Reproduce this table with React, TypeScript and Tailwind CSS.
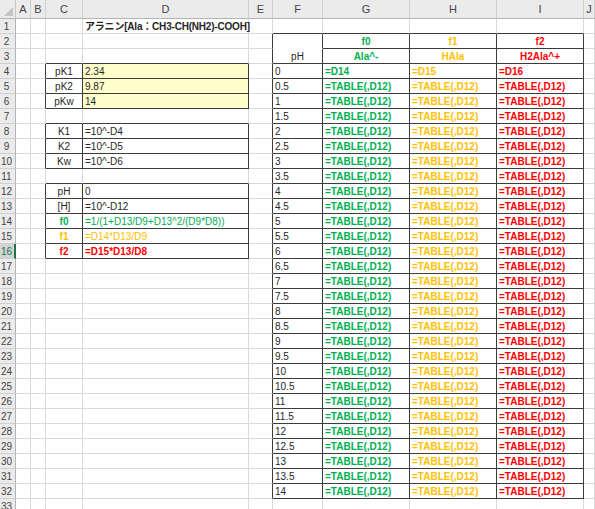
import React from "react";

type CellData = { t: string; cls?: string; center?: boolean; spill?: boolean };

const COLS = ["A", "B", "C", "D", "E", "F", "G", "H", "I", "J"];
const ROWS = Array.from({ length: 33 }, (_, i) => i + 1);

const GREEN = "text-[#00b050] font-bold";
const ORANGE = "text-[#ffc000] font-bold";
const RED = "text-[#ff0000] font-bold";

const cells: Record<string, CellData> = {
  D1: { t: "アラニン[Ala：CH3-CH(NH2)-COOH]", cls: "font-bold text-[#262626] tracking-[-0.2px]", spill: true },
  C4: { t: "pK1", center: true },
  D4: { t: "2.34" },
  C5: { t: "pK2", center: true },
  D5: { t: "9.87" },
  C6: { t: "pKw", center: true },
  D6: { t: "14" },
  C8: { t: "K1", center: true },
  D8: { t: "=10^-D4" },
  C9: { t: "K2", center: true },
  D9: { t: "=10^-D5" },
  C10: { t: "Kw", center: true },
  D10: { t: "=10^-D6" },
  C12: { t: "pH", center: true },
  D12: { t: "0" },
  C13: { t: "[H]", center: true },
  D13: { t: "=10^-D12" },
  C14: { t: "f0", cls: GREEN, center: true },
  D14: { t: "=1/(1+D13/D9+D13^2/(D9*D8))", cls: "text-[#00b050]" },
  C15: { t: "f1", cls: ORANGE, center: true },
  D15: { t: "=D14*D13/D9", cls: "text-[#ffc000]" },
  C16: { t: "f2", cls: RED, center: true },
  D16: { t: "=D15*D13/D8", cls: RED },
  G2: { t: "f0", cls: GREEN, center: true },
  H2: { t: "f1", cls: ORANGE, center: true },
  I2: { t: "f2", cls: RED, center: true },
  F3: { t: "pH", center: true },
  G3: { t: "Ala^-", cls: GREEN, center: true },
  H3: { t: "HAla", cls: ORANGE, center: true },
  I3: { t: "H2Ala^+", cls: RED, center: true },
  G4: { t: "=D14", cls: GREEN },
  H4: { t: "=D15", cls: ORANGE },
  I4: { t: "=D16", cls: RED },
};

for (let r = 4; r <= 32; r++) {
  cells[`F${r}`] = { t: String((r - 4) / 2) };
  if (r > 4) {
    cells[`G${r}`] = { t: "=TABLE(,D12)", cls: GREEN };
    cells[`H${r}`] = { t: "=TABLE(,D12)", cls: ORANGE };
    cells[`I${r}`] = { t: "=TABLE(,D12)", cls: RED };
  }
}

const inBoxRows = (r: number) => (r >= 4 && r <= 6) || (r >= 8 && r <= 10) || (r >= 12 && r <= 16);
const inTable = (c: string) => ["F", "G", "H", "I"].includes(c);

function blackRight(c: string, r: number) {
  if (["B", "C", "D"].includes(c) && inBoxRows(r)) return true;
  if ((c === "E" || inTable(c)) && r >= 2 && r <= 32) return true;
  return false;
}

function blackBottom(c: string, r: number) {
  if ((c === "C" || c === "D") && r >= 3 && r <= 16) return true;
  if (inTable(c) && r >= 1 && r <= 32 && !(c === "F" && r === 2)) return true;
  return false;
}

function Cell({ c, r }: { c: string; r: number }) {
  const d = cells[`${c}${r}`];
  const merged = c === "F" && r === 2;
  const fill = c === "D" && r >= 4 && r <= 6 ? "bg-[#ffffcc]" : "bg-white";
  return (
    <div
      className={`relative flex items-center border-r border-b ${fill} ${d?.spill ? "z-10" : ""} ${
        blackRight(c, r) ? "border-r-[#3c3c3c]" : "border-r-[#dadada]"
      } ${blackBottom(c, r) ? "border-b-[#3c3c3c]" : merged ? "border-b-white" : "border-b-[#dadada]"}`}
    >
      {d && (
        <span
          className={`absolute left-0 top-0 flex h-full items-center whitespace-nowrap px-[2px] ${
            d.center ? "w-full justify-center" : ""
          } ${d.cls ?? "text-[#262626]"}`}
        >
          {d.t}
        </span>
      )}
    </div>
  );
}

export default function App() {
  return (
    <div
      className="h-[509px] w-[595px] overflow-hidden bg-white text-[10px]"
      style={{ fontFamily: '"Liberation Sans", "Noto Sans CJK JP", sans-serif' }}
    >
      <div className="grid grid-cols-[16px_15px_15px_37px_166px_24px_50px_87px_87px_87px_1fr] grid-rows-[19px_repeat(33,15px)]">
        {/* corner */}
        <div className="relative border-r border-b border-r-[#c6c6c6] border-b-[#b4b4b4] bg-[#ebebeb]">
          <svg className="absolute bottom-[2px] right-[2px]" width="9" height="9" viewBox="0 0 9 9">
            <polygon points="9,0 9,9 0,9" fill="#c4c4c4" />
          </svg>
        </div>
        {COLS.map((c) => (
          <div
            key={c}
            className="flex items-center justify-center border-r border-b border-r-[#cfcfcf] border-b-[#b4b4b4] bg-[#ebebeb] text-[11px] text-[#444]"
          >
            {c}
          </div>
        ))}
        {ROWS.map((r) => (
          <React.Fragment key={r}>
            {r === 16 ? (
              <div className="flex items-center justify-center border-b border-r-2 border-b-[#cfcfcf] border-r-[#217346] bg-[#d4d4d4] pr-[1px] text-[10px] text-[#217346]">
                {r}
              </div>
            ) : (
              <div className="flex items-center justify-center border-r border-b border-r-[#b4b4b4] border-b-[#cfcfcf] bg-[#ebebeb] pr-[2px] text-[10px] text-[#444]">
                {r}
              </div>
            )}
            {COLS.map((c) => (
              <Cell key={c} c={c} r={r} />
            ))}
          </React.Fragment>
        ))}
      </div>
    </div>
  );
}
